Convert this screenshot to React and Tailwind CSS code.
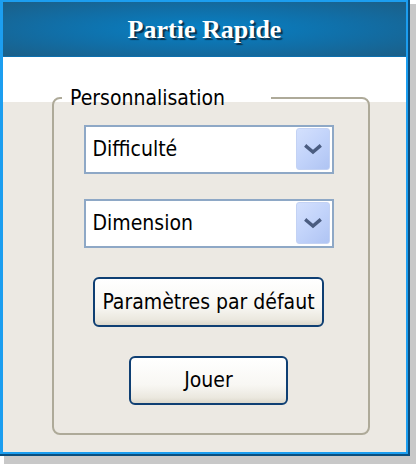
import React from "react";

const uiFont = "font-['DejaVu_Sans_Condensed','Liberation_Sans',sans-serif]";

// chevron for the dropdown button
const Chevron = () => (
  <svg width="18" height="11" viewBox="0 0 18 11" fill="none">
    <path d="M2.5 2.5 L9 8 L15.5 2.5" stroke="#4a5c80" strokeWidth="3.4" strokeLinecap="square" />
  </svg>
);

const Dropdown = ({ label }) => (
  <div className="flex h-[49px] w-[250px] items-center justify-between border-2 border-[#8ea8c6] bg-white pl-[7px] pr-[2px]">
    <span className="text-[21px] leading-none text-black">{label}</span>
    <div className="mb-[1px] flex h-[42px] w-[34px] items-center justify-center rounded-[3px] border border-[#c3d2f4] bg-[linear-gradient(135deg,#d3e0fd_0%,#c2d3fa_50%,#afc4f3_100%)]">
      <Chevron />
    </div>
  </div>
);

const XpButton = ({ children, className }) => (
  <button
    className={`flex items-center justify-center rounded-[6px] border-2 border-[#0f3f73] bg-[linear-gradient(to_bottom,#ffffff_0%,#f8f7f3_60%,#ebe8df_88%,#dcd8cc_100%)] text-[21px] leading-none text-black ${className}`}
  >
    {children}
  </button>
);

export default function App() {
  return (
    <div className="h-[464px] w-[416px] overflow-hidden bg-white">
      <div className="flex h-[456px] w-[410px] flex-col border-b-2 border-r-2 border-[#0b4d7c] shadow-[6px_6px_0_2px_#c8c8c8]">
        <div className="flex flex-1 flex-col border-[2px] border-l-[3px] border-[#1c9ef0]">
          {/* title bar */}
          <div className="flex h-[55px] items-center justify-center border-b border-[#0c6fae] bg-[radial-gradient(ellipse_at_center,#0781c6_0%,#116ea6_55%,#1b5f88_100%)]">
            <h1 className="pt-[1px] font-['Liberation_Serif',serif] text-[26px] font-bold leading-none text-white [text-shadow:2px_2px_1px_#08304d]">
              Partie Rapide
            </h1>
          </div>

          {/* body */}
          <div className={`flex-1 bg-[linear-gradient(to_bottom,#ffffff_45px,#ece9e3_45px)] ${uiFont}`}>
            <fieldset className="ml-[49px] mt-[29px] w-[318px] rounded-[8px] border-2 border-[#aeaa99] p-0 pb-[28px] pt-[15px]">
              <legend className="ml-[8px] pl-[8px] pr-[46px] text-[21px] leading-[24px] text-black">
                Personnalisation
              </legend>
              <div className="flex flex-col items-center pr-[5px]">
                <Dropdown label="Difficulté" />
                <div className="mt-[25px]">
                  <Dropdown label="Dimension" />
                </div>
                <XpButton className="mt-[29px] h-[50px] w-[231px]">Paramètres par défaut</XpButton>
                <XpButton className="mt-[29px] h-[49px] w-[159px]">Jouer</XpButton>
              </div>
            </fieldset>
          </div>
        </div>
      </div>
    </div>
  );
}
